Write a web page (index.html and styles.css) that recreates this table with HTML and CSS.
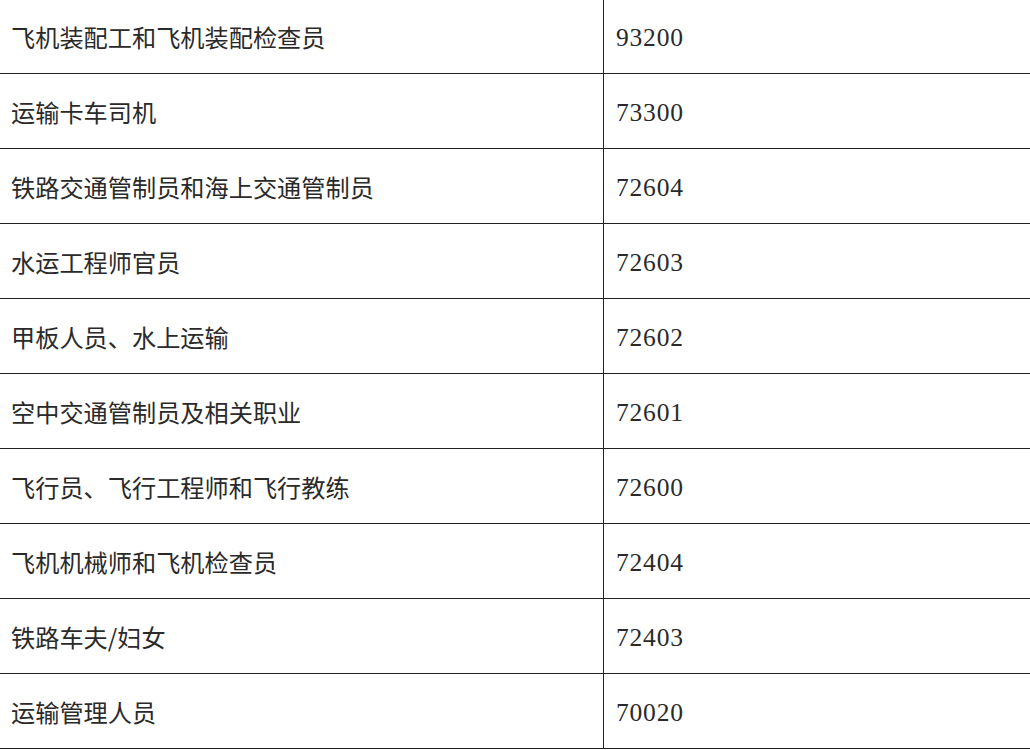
FILE: index.html
```html
<!DOCTYPE html>
<html lang="zh">
<head>
<meta charset="utf-8">
<link rel="stylesheet" href="styles.css">
</head>
<body>
<div class="table">
  <div class="row"><div class="name">飞机装配工和飞机装配检查员</div><div class="code">93200</div></div>
  <div class="row"><div class="name">运输卡车司机</div><div class="code">73300</div></div>
  <div class="row"><div class="name">铁路交通管制员和海上交通管制员</div><div class="code">72604</div></div>
  <div class="row"><div class="name">水运工程师官员</div><div class="code">72603</div></div>
  <div class="row"><div class="name">甲板人员、水上运输</div><div class="code">72602</div></div>
  <div class="row"><div class="name">空中交通管制员及相关职业</div><div class="code">72601</div></div>
  <div class="row"><div class="name">飞行员、飞行工程师和飞行教练</div><div class="code">72600</div></div>
  <div class="row"><div class="name">飞机机械师和飞机检查员</div><div class="code">72404</div></div>
  <div class="row"><div class="name">铁路车夫/妇女</div><div class="code">72403</div></div>
  <div class="row"><div class="name">运输管理人员</div><div class="code">70020</div></div>
</div>
</body>
</html>
```
FILE: styles.css
```css
html, body {
  margin: 0;
  padding: 0;
  background: #fff;
}
.table {
  display: flex;
  flex-direction: column;
  width: 1030px;
}
.row {
  display: grid;
  grid-template-columns: 604px 1fr;
  height: 75px;
  border-bottom: 1px solid #222;
  box-sizing: border-box;
}
.row:first-child {
  height: 74px;
}
.name, .code {
  display: flex;
  align-items: center;
  color: #2a2a2a;
}
.name {
  padding-left: 11px;
  font-family: "Noto Sans CJK SC", sans-serif;
  font-size: 24.2px;
  border-right: 1px solid #222;
}
.code {
  padding-left: 12px;
  font-family: "Liberation Serif", serif;
  font-size: 25.5px;
  letter-spacing: 0.8px;
  padding-top: 3px;
}
```
